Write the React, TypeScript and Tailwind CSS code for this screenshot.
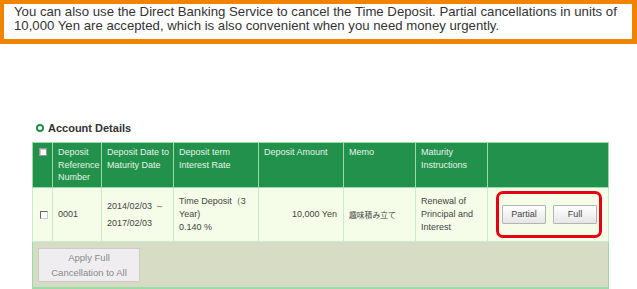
import React from "react";

const headers = [
  ["Deposit", "Reference", "Number"],
  ["Deposit Date to", "Maturity Date"],
  ["Deposit term", "Interest Rate"],
  ["Deposit Amount"],
  ["Memo"],
  ["Maturity", "Instructions"],
  [],
];

const widths = [20, 49, 72, 85, 85, 72, 72, 121];

function Box({ header = false }: { header?: boolean }) {
  return (
    <span
      className={
        header
          ? "block w-[8px] h-[8px] bg-white border border-[#999] shadow-[inset_1px_1px_0_#ccc]"
          : "block w-[8px] h-[8px] bg-white border border-t-[#666] border-l-[#666] border-r-[#ccc] border-b-[#ccc]"
      }
    />
  );
}

function SmallButton({ label }: { label: string }) {
  return (
    <button className="w-[44px] h-[19px] border border-[#b4b4b4] bg-gradient-to-b from-white to-[#e6e6e6] text-[9px] text-[#444] leading-none rounded-[1px]">
      {label}
    </button>
  );
}

export default function App() {
  return (
    <div className="w-[637px] h-[289px] bg-white overflow-hidden font-['Liberation_Sans',Arial,sans-serif]">
      {/* Notice */}
      <div className="w-[637px] h-[44px] bg-[#f08300] pt-[4px] pl-[4px] pr-[5px] pb-[5px]">
        <div className="h-full bg-white pl-[10px] pt-[1px] text-[13.2px] leading-[14px] text-[#333] whitespace-nowrap">
          You can also use the Direct Banking Service to cancel the Time Deposit. Partial cancellations in units of
          <br />
          10,000 Yen are accepted, which is also convenient when you need money urgently.
        </div>
      </div>

      {/* Heading */}
      <div className="flex items-center gap-[4px] pl-[36px] mt-[78px] h-[12px]">
        <span className="w-[8px] h-[8px] rounded-full border-[2px] border-[#1f914a]" />
        <span className="text-[11px] font-bold text-[#333] leading-none">Account Details</span>
      </div>

      {/* Table */}
      <table className="ml-[32px] mt-[8px] border-collapse table-fixed w-[577px] text-[9px]">
        <colgroup>
          {widths.map((w, i) => (
            <col key={i} style={{ width: w }} />
          ))}
        </colgroup>
        <thead>
          <tr className="h-[45px] bg-[#21914b] text-[#e6f4e6]">
            <th className="border border-[#9bdba8] align-top pt-[5px]">
              <div className="flex justify-center">
                <Box header />
              </div>
            </th>
            {headers.map((lines, i) => (
              <th
                key={i}
                className="border border-[#9bdba8] align-top text-left font-normal leading-[12.7px] pt-[3px] pl-[5px] pr-0 whitespace-nowrap"
              >
                {lines.map((l) => (
                  <div key={l}>{l}</div>
                ))}
              </th>
            ))}
          </tr>
        </thead>
        <tbody className="text-[#444]">
          <tr className="h-[54px] bg-[#f5fde8]">
            <td className="border border-[#c8eccd] align-middle">
              <div className="flex justify-center pl-[2px]">
                <Box />
              </div>
            </td>
            <td className="border border-[#c8eccd] pl-[5px]">0001</td>
            <td className="border border-[#c8eccd] pl-[5px] leading-[16.5px]">
              2014/02/03 ～
              <br />
              2017/02/03
            </td>
            <td className="border border-[#c8eccd] pl-[5px] leading-[13px]">
              Time Deposit（3
              <br />
              Year)
              <br />
              0.140 %
            </td>
            <td className="border border-[#c8eccd] text-right pr-[6px]">10,000 Yen</td>
            <td className="border border-[#c8eccd] pl-[5px] font-['Noto_Sans_CJK_JP',sans-serif] text-[7.8px]">
              趣味積み立て
            </td>
            <td className="border border-[#c8eccd] pl-[5px] leading-[12.7px]">
              Renewal of
              <br />
              Principal and
              <br />
              Interest
            </td>
            <td className="border border-[#c8eccd] pl-[8px]">
              <div className="w-[106px] h-[47px] border-[3px] border-[#e60012] rounded-[7px] flex items-center gap-[7px] pl-[3px]">
                <SmallButton label="Partial" />
                <SmallButton label="Full" />
              </div>
            </td>
          </tr>
          <tr className="h-[46px] bg-[#d7ddc5]">
            <td colSpan={8} className="border border-[#9bdba8] border-b-[2px] pl-[5px] align-middle">
              <button className="w-[102px] h-[34px] border border-[#cccccc] bg-[#efedef] text-[#8a8a8a] text-[9.5px] leading-[15px] mt-[1px]">
                Apply Full
                <br />
                Cancellation to All
              </button>
            </td>
          </tr>
        </tbody>
      </table>
    </div>
  );
}
